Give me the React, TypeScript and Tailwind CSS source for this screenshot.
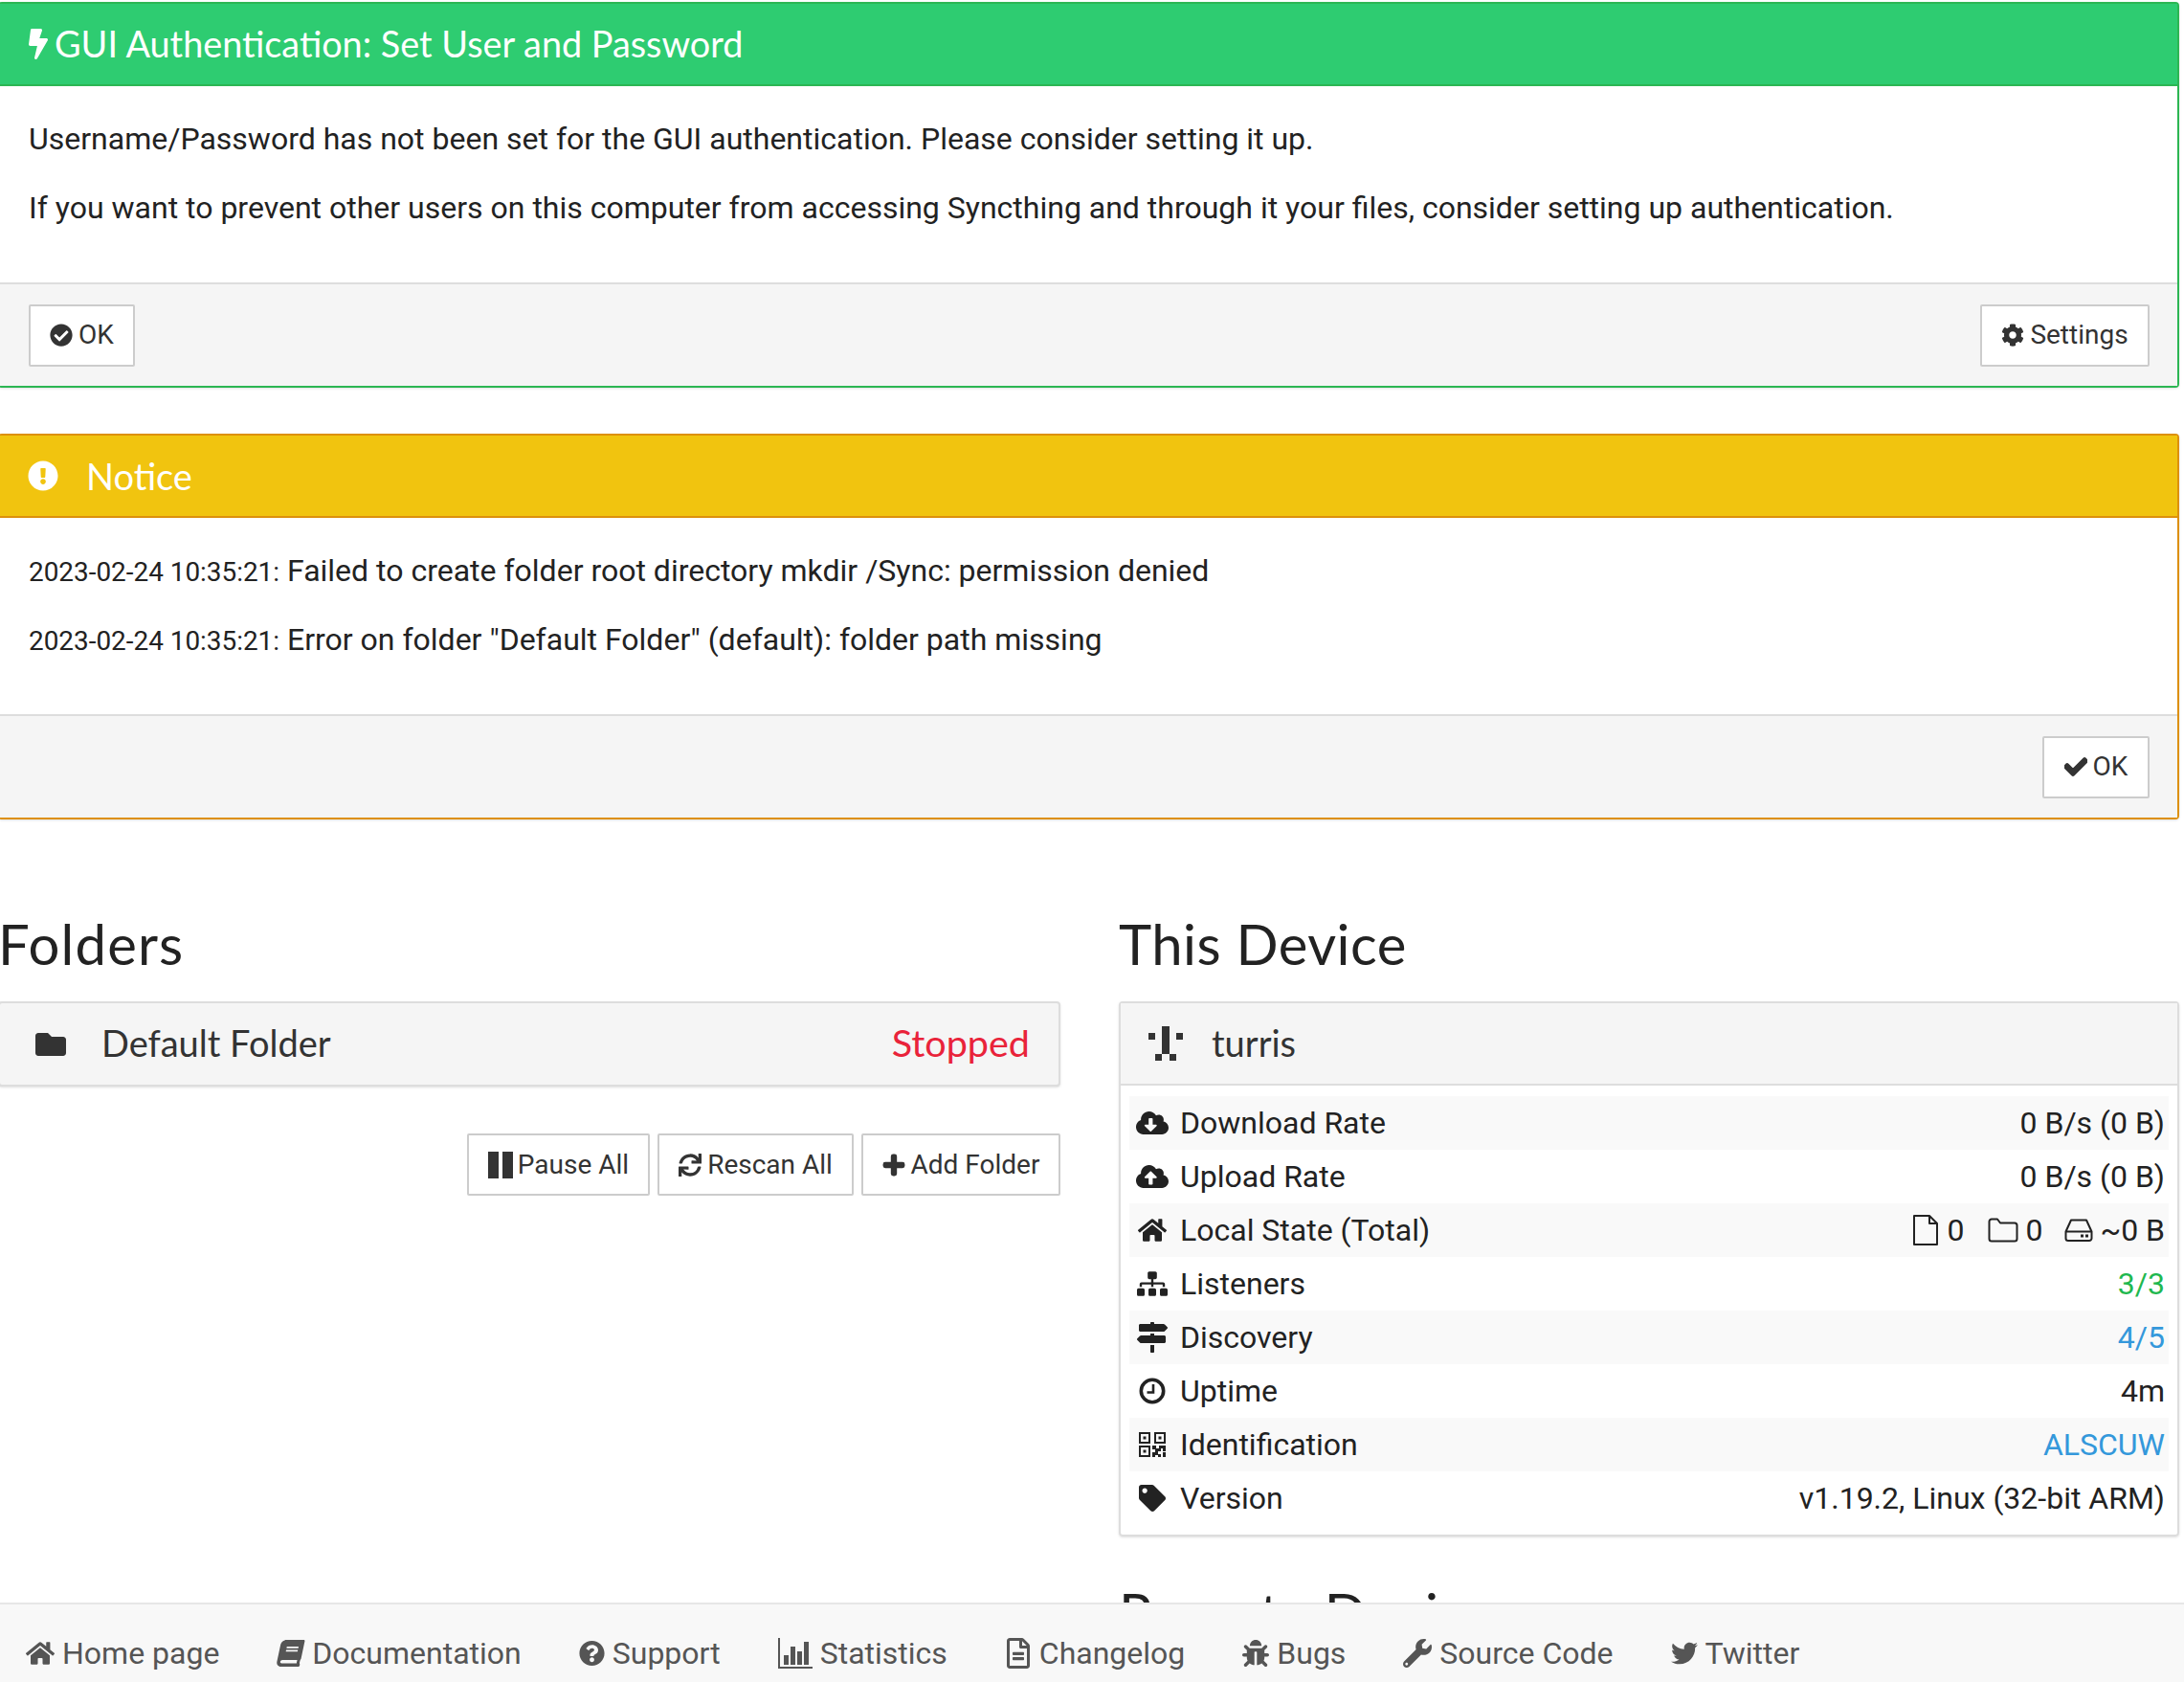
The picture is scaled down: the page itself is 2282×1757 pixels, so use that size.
import React from 'react';
import {
  FaBolt, FaCheckCircle, FaCog, FaCheck, FaExclamationCircle, FaFolder, FaSync, FaPlus,
  FaCloudDownloadAlt, FaCloudUploadAlt, FaHome, FaSitemap, FaMapSigns, FaTag,
  FaBook, FaQuestionCircle, FaRegFileAlt, FaBug, FaWrench, FaTwitter,
} from 'react-icons/fa';

const Btn: React.FC<{ icon: React.ReactNode; label: string; className?: string }> = ({ icon, label, className = '' }) => (
  <button type="button" className={`flex items-center justify-center gap-[6px] h-[65px] bg-white border-2 border-[#ccc] rounded-[2px] text-[#333] text-[28px] ${className}`}>
    {icon}
    <span>{label}</span>
  </button>
);

const Row: React.FC<{ icon: React.ReactNode; label: string; striped?: boolean; children: React.ReactNode }> = ({ icon, label, striped, children }) => (
  <div className={`flex items-center justify-between h-14 pr-[4px] ${striped ? 'bg-[#f9f9f9]' : ''}`}>
    <div className="flex items-center">
      <span className="w-[48px] mr-[5px] flex justify-center shrink-0 text-[#222]">{icon}</span>
      <span>{label}</span>
    </div>
    <div className="flex items-center">{children}</div>
  </div>
);

const FootLink: React.FC<{ icon: React.ReactNode; label: string }> = ({ icon, label }) => (
  <a className="flex items-center gap-[8px] text-[#555] text-[32px]">
    {icon}
    <span>{label}</span>
  </a>
);

function Identicon() {
  const cells = [[2, 0], [0, 1], [2, 1], [4, 1], [2, 2], [2, 3], [1, 4], [3, 4]];
  return (
    <svg viewBox="0 0 5 5" className="w-9 h-9 text-[#333]" shapeRendering="crispEdges">
      {cells.map(([x, y]) => (
        <rect key={`${x}-${y}`} x={x} y={y} width={1} height={1} fill="currentColor" />
      ))}
    </svg>
  );
}

const PauseIcon = () => (
  <svg viewBox="0 0 26 28" className="w-[26px] h-[28px] -mr-[1px]" fill="currentColor">
    <rect x="0" y="0" width="11" height="28" />
    <rect x="15" y="0" width="11" height="28" />
  </svg>
);

const ClockIcon = () => (
  <svg viewBox="0 0 28 28" className="w-[28px] h-[28px]" fill="none" stroke="currentColor">
    <circle cx="14" cy="14" r="11.7" strokeWidth="3.6" />
    <path d="M15 7v8.500H8.500" strokeWidth="2.600" />
  </svg>
);

const QrIcon = () => (
  <svg viewBox="0 0 28 26" className="w-[28px] h-[26px]" fill="none" stroke="currentColor">
    <rect x="1" y="1" width="10" height="10" strokeWidth="2" />
    <rect x="17" y="1" width="10" height="10" strokeWidth="2" />
    <rect x="1" y="15" width="10" height="10" strokeWidth="2" />
    <g fill="currentColor" stroke="none">
      <rect x="4.500" y="4.500" width="3" height="3" />
      <rect x="20.500" y="4.500" width="3" height="3" />
      <rect x="4.500" y="18.500" width="3" height="3" />
      <path d="M14 14h4v3h3v-3h7v6h-3v-3h-2v3h-3v3h3v3h-3v-2h-3v2h-3v-5h3v-3h-3zM25 21h3v5h-3z" />
    </g>
  </svg>
);

const FileOutline = () => (
  <svg viewBox="0 0 28 34" className="w-[28px] h-[34px] mr-[8px]" fill="none" stroke="currentColor" strokeWidth="2">
    <path d="M2 2h16l8 8v22H2zM18 2v8h8" strokeLinejoin="round" />
  </svg>
);

const FolderOutline = () => (
  <svg viewBox="0 0 32 26" className="w-[32px] h-[26px] ml-[25px] mr-[7px]" fill="none" stroke="currentColor" strokeWidth="2">
    <path d="M1.500 4a2.500 2.500 0 0 1 2.500-2.500h6L13 5.500h15a2.500 2.500 0 0 1 2.500 2.500v14a2.500 2.500 0 0 1-2.500 2.500H4A2.500 2.500 0 0 1 1.500 22z" strokeLinejoin="round" />
  </svg>
);

const HddOutline = () => (
  <svg viewBox="0 0 30 24" className="w-[30px] h-[24px] ml-[23px] mr-[7px]" fill="none" stroke="currentColor" strokeWidth="2">
    <path d="M7 1.500h16l5.500 12v7a2.500 2.500 0 0 1-2.500 2.500H4a2.500 2.500 0 0 1-2.500-2.500v-7zM1.500 13.500h27" strokeLinejoin="round" />
    <rect x="17" y="16.500" width="3" height="3" fill="currentColor" stroke="none" />
    <rect x="22" y="16.500" width="3" height="3" fill="currentColor" stroke="none" />
  </svg>
);

const ChartIcon = () => (
  <svg viewBox="0 0 36 32" className="w-[36px] h-[32px]" fill="currentColor">
    <path d="M0 0h2v30h34v2H0z" />
    <rect x="6" y="18" width="5" height="10" />
    <rect x="13" y="9" width="5" height="19" />
    <rect x="20" y="14" width="5" height="14" />
    <rect x="27" y="4" width="5" height="24" />
  </svg>
);

export default function App() {
  return (
    <div className="relative h-[1757px] w-[2282px] overflow-hidden bg-white pt-[2px] text-[#222] font-['Roboto',sans-serif] text-[32px]">
      <div className="w-[2277px]">
        {/* GUI auth notice */}
        <div className="-ml-[2px] border-2 border-[#2cb653] rounded-[4px] shadow-sm">
          <div className="flex items-center h-[86px] bg-[#2ecc71] border-b-2 border-[#2cb653] pl-[30px] text-white font-['Lato',sans-serif] text-[37.8px]">
            <FaBolt className="w-[20px] h-[34px] mr-[7px]" />
            <span>GUI Authentication: Set User and Password</span>
          </div>
          <div className="h-[205px] pl-[30px] pt-[31px]">
            <p className="h-[72px]">Username/Password has not been set for the GUI authentication. Please consider setting it up.</p>
            <p>If you want to prevent other users on this computer from accessing Syncthing and through it your files, consider setting up authentication.</p>
          </div>
          <div className="flex items-center justify-between h-[108px] bg-[#f5f5f5] border-t-2 border-[#ddd] pl-[30px] pr-[29px]">
            <Btn className="w-[111px]" icon={<FaCheckCircle className="w-6 h-6" />} label="OK" />
            <Btn className="w-[177px]" icon={<FaCog className="w-6 h-6" />} label="Settings" />
          </div>
        </div>

        {/* Notice */}
        <div className="-ml-[2px] mt-[48px] border-2 border-[#dd900c] rounded-[4px] shadow-sm">
          <div className="flex items-center h-[86px] bg-[#f1c40f] border-b-2 border-[#dd900c] pl-[29px] text-white font-['Lato',sans-serif] text-[38px]">
            <FaExclamationCircle className="w-8 h-8 mr-[29px]" />
            <span>Notice</span>
          </div>
          <div className="h-[205px] pl-[30px] pt-[31px]">
            <p className="h-[72px]"><span className="text-[27.9px]">2023-02-24 10:35:21:</span> Failed to create folder root directory mkdir /Sync: permission denied</p>
            <p><span className="text-[27.9px]">2023-02-24 10:35:21:</span> Error on folder "Default Folder" (default): folder path missing</p>
          </div>
          <div className="flex items-center justify-end h-[108px] bg-[#f5f5f5] border-t-2 border-[#ddd] pr-[29px]">
            <Btn className="w-[112px]" icon={<FaCheck className="w-6 h-6 [stroke-width:40]" />} label="OK" />
          </div>
        </div>

        <div className="flex gap-[61px] mt-[90px]">
          {/* Folders */}
          <div className="w-[1108px] shrink-0">
            <h2 className="h-[100px] -ml-[2px] font-['Lato',sans-serif] text-[58px] tracking-[1.200px] leading-[80px] text-[#222]">Folders</h2>
            <div className="-ml-[2px] flex items-center justify-between h-[89px] bg-[#f5f5f5] border-2 border-[#ddd] rounded-[4px] shadow-sm pl-[35px] pr-[30px] font-['Lato',sans-serif] text-[38px] text-[#333]">
              <div className="flex items-center">
                <FaFolder className="w-[36px] h-[32px] mr-[35px]" />
                <span className="-mt-[2px]">Default Folder</span>
              </div>
              <span className="-mt-[3px] text-[#e9233a] text-[39.500px]">Stopped</span>
            </div>
            <div className="flex justify-end gap-[8px] mt-[49px]">
              <Btn className="w-[191px]" icon={<PauseIcon />} label="Pause All" />
              <Btn className="w-[205px]" icon={<FaSync className="w-6 h-6" />} label="Rescan All" />
              <Btn className="w-[208px]" icon={<FaPlus className="w-6 h-6 [stroke-width:40]" />} label="Add Folder" />
            </div>
          </div>

          {/* This Device */}
          <div className="w-[1108px] shrink-0">
            <h2 className="h-[100px] font-['Lato',sans-serif] text-[58px] tracking-[0.5px] leading-[80px] text-[#222]">This Device</h2>
            <div className="border-2 border-[#ddd] rounded-[4px] shadow-sm">
              <div className="flex items-center h-[86px] bg-[#f5f5f5] border-b-2 border-[#ddd] pl-[29px] font-['Lato',sans-serif] text-[38px] text-[#333]">
                <Identicon />
                <span className="ml-[30px] -mt-[2px]">turris</span>
              </div>
              <div className="pl-[9px] pr-[9px] pt-[11px] pb-[10px]">
                <Row striped label="Download Rate" icon={<FaCloudDownloadAlt className="w-[34px] h-[30px]" />}>0 B/s (0 B)</Row>
                <Row label="Upload Rate" icon={<FaCloudUploadAlt className="w-[34px] h-[30px]" />}>0 B/s (0 B)</Row>
                <Row striped label="Local State (Total)" icon={<FaHome className="w-[30px] h-[28px]" />}>
                  <FileOutline />
                  <span>0</span>
                  <FolderOutline />
                  <span>0</span>
                  <HddOutline />
                  <span>~0 B</span>
                </Row>
                <Row label="Listeners" icon={<FaSitemap className="w-[32px] h-[30px]" />}><span className="text-[#1fb84f]">3/3</span></Row>
                <Row striped label="Discovery" icon={<FaMapSigns className="w-[32px] h-[32px]" />}><span className="text-[#3498db]">4/5</span></Row>
                <Row label="Uptime" icon={<ClockIcon />}>4m</Row>
                <Row striped label="Identification" icon={<QrIcon />}><span className="text-[#3498db]">ALSCUW</span></Row>
                <Row label="Version" icon={<FaTag className="w-[28px] h-[28px]" />}>v1.19.2, Linux (32-bit ARM)</Row>
              </div>
            </div>
            <h2 className="mt-[40px] font-['Lato',sans-serif] text-[58px] tracking-[0.5px] leading-[80px] text-[#222]">Remote Devices</h2>
          </div>
        </div>
      </div>

      {/* fixed footer nav */}
      <div className="absolute left-0 right-0 bottom-0 flex items-center gap-[60px] h-[83px] bg-[#f8f8f8] border-t-2 border-[#e7e7e7] pl-[27px] pt-[20px]">
        <FootLink icon={<FaHome className="w-[30px] h-[28px]" />} label="Home page" />
        <FootLink icon={<FaBook className="w-[29px] h-[28px] -skew-x-12" />} label="Documentation" />
        <FootLink icon={<FaQuestionCircle className="w-[27px] h-[28px]" />} label="Support" />
        <FootLink icon={<ChartIcon />} label="Statistics" />
        <FootLink icon={<FaRegFileAlt className="w-[28px] h-[32px]" />} label="Changelog" />
        <FootLink icon={<FaBug className="w-[28px] h-[30px]" />} label="Bugs" />
        <FootLink icon={<FaWrench className="w-[30px] h-[30px]" />} label="Source Code" />
        <FootLink icon={<FaTwitter className="w-[28px] h-[28px]" />} label="Twitter" />
      </div>
    </div>
  );
}
